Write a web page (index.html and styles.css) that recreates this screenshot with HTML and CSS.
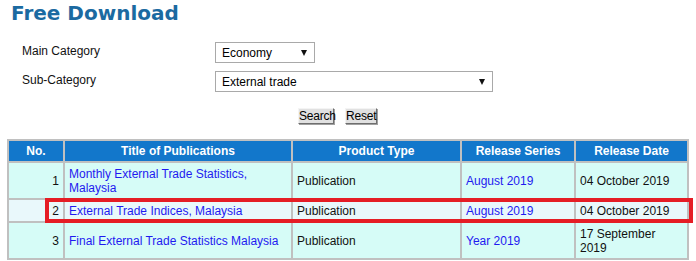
FILE: index.html
```html
<!DOCTYPE html>
<html>
<head>
<meta charset="utf-8">
<title>Free Download</title>
<link rel="stylesheet" href="styles.css">
</head>
<body>
<div class="page">
  <h1 class="title">Free Download</h1>
  <div class="filters">
    <label class="label">Main Category</label>
    <div class="select select-main"><span>Economy</span><span class="arrow"></span></div>
    <label class="label">Sub-Category</label>
    <div class="select select-sub"><span>External trade</span><span class="arrow"></span></div>
  </div>
  <div class="actions">
    <button class="btn btn-search">Search</button>
    <button class="btn btn-reset">Reset</button>
  </div>
  <table class="results">
    <thead>
      <tr>
        <th class="c-no">No.</th>
        <th class="c-title">Title of Publications</th>
        <th class="c-type">Product Type</th>
        <th class="c-series">Release Series</th>
        <th class="c-date">Release Date</th>
      </tr>
    </thead>
    <tbody>
      <tr>
        <td class="num">1</td>
        <td><a href="#">Monthly External Trade Statistics, Malaysia</a></td>
        <td>Publication</td>
        <td><a href="#">August 2019</a></td>
        <td>04 October 2019</td>
      </tr>
      <tr class="alt">
        <td class="num">2</td>
        <td><a href="#">External Trade Indices, Malaysia</a></td>
        <td>Publication</td>
        <td><a href="#">August 2019</a></td>
        <td>04 October 2019</td>
      </tr>
      <tr>
        <td class="num">3</td>
        <td><a href="#">Final External Trade Statistics Malaysia</a></td>
        <td>Publication</td>
        <td><a href="#">Year 2019</a></td>
        <td>17 September 2019</td>
      </tr>
    </tbody>
  </table>
  <div class="highlight"></div>
</div>
</body>
</html>
```
FILE: styles.css
```css
* { box-sizing: border-box; }
html, body { margin: 0; padding: 0; background: #fff; }
body { font-family: "Liberation Sans", Arial, sans-serif; font-size: 12px; color: #111; }
.page { position: relative; width: 696px; height: 261px; overflow: hidden; }

.title {
  margin: 0;
  padding: 0 0 0 11px;
  font-family: "DejaVu Sans", Verdana, sans-serif;
  font-weight: bold;
  font-size: 20px;
  line-height: 26px;
  color: #1b6aa1;
}

.filters {
  display: grid;
  grid-template-columns: 193px auto;
  row-gap: 8px;
  margin: 16px 0 0 22px;
  align-items: start;
}
.label { font-size: 12px; line-height: 14px; padding-top: 2px; color: #111; }
.select {
  display: flex;
  align-items: center;
  justify-content: space-between;
  height: 21px;
  border: 1px solid #a9a9a9;
  background: #fff;
  padding: 0 7px 0 6px;
  font-size: 12px;
  color: #000;
}
.select-main { width: 100px; }
.select-sub { width: 278px; }
.arrow {
  width: 0; height: 0;
  border-left: 3.5px solid transparent;
  border-right: 3.5px solid transparent;
  border-top: 6px solid #111;
}

.actions {
  display: flex;
  gap: 11px;
  margin: 16px 0 0 298px;
}
.btn {
  height: 16px;
  padding: 0;
  font-family: "Liberation Sans", Arial, sans-serif;
  font-size: 12px;
  line-height: 13px;
  letter-spacing: -0.2px;
  color: #000;
  background: #e1e1e1;
  border: 1px solid;
  border-color: #f4f4f4 #6e6e6e #6e6e6e #f4f4f4;
  box-shadow: 1px 1px 0 #a0a0a0;
  overflow: visible;
  white-space: nowrap;
}
.btn-search { width: 36px; }
.btn-reset { width: 32px; }

.results {
  margin: 15px 0 0 7px;
  width: 682px;
  table-layout: fixed;
  border-collapse: separate;
  border-spacing: 0;
  border: 1px solid #c0c0c0;
  font-size: 12px;
}
.results th, .results td {
  border: 1px solid #c0c0c0;
  line-height: 14px;
  vertical-align: middle;
}
.results th {
  background: #1277cb;
  color: #fff;
  font-weight: bold;
  text-align: center;
  padding: 3px 4px;
}
.results td {
  background: #d6fcf7;
  padding: 4px 4px 3px;
  text-align: left;
  color: #111;
}
.results tr.alt td { background: #e9f8fb; }
.results td.num { text-align: right; }
.results a { color: #1f1af0; text-decoration: none; }
.c-no { width: 56px; }
.c-title { width: 228px; }
.c-type { width: 169px; }
.c-series { width: 114px; }
.c-date { width: 113px; }

.highlight {
  position: absolute;
  left: 45px;
  top: 198px;
  width: 648px;
  height: 25px;
  border: 4px solid #e51d25;
  pointer-events: none;
}
```
